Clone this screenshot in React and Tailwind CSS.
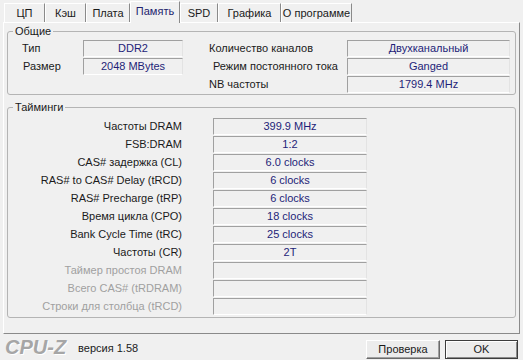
import React from 'react';

const tabs = [
  { name: 'ЦП', w: 'w-[41px]' },
  { name: 'Кэш', w: 'w-[41px]' },
  { name: 'Плата', w: 'w-[44px]' },
  { name: 'Память', w: 'w-[50px]', active: true },
  { name: 'SPD', w: 'w-[38px]' },
  { name: 'Графика', w: 'w-[63px]' },
  { name: 'О программе', w: 'w-[71px]' },
];

const timings = [
  { label: 'Частоты DRAM', value: '399.9 MHz' },
  { label: 'FSB:DRAM', value: '1:2' },
  { label: 'CAS# задержка (CL)', value: '6.0 clocks' },
  { label: 'RAS# to CAS# Delay (tRCD)', value: '6 clocks' },
  { label: 'RAS# Precharge (tRP)', value: '6 clocks' },
  { label: 'Время цикла (CPO)', value: '18 clocks' },
  { label: 'Bank Cycle Time (tRC)', value: '25 clocks' },
  { label: 'Частоты (CR)', value: '2T' },
  { label: 'Таймер простоя DRAM', value: '', off: true },
  { label: 'Всего CAS# (tRDRAM)', value: '', off: true },
  { label: 'Строки для столбца (tRCD)', value: '', off: true },
];

// sunken read-only box
const Field = ({ children }) => (
  <div className="h-[17px] flex items-center justify-center border border-t-[#a0a0a0] border-l-[#a0a0a0] border-b-white border-r-[#e3e3e3] text-[#1e1e78] leading-none">
    {children}
  </div>
);

const Group = ({ title, className, children }) => (
  <fieldset className={`mx-[3px] border border-[#b4b4b4] rounded-[3px] ${className}`}>
    <legend className="ml-[5px] px-[2px] leading-[13px]">{title}</legend>
    {children}
  </fieldset>
);

export default function App() {
  return (
    <div className="w-[523px] h-[360px] bg-[#f0f0f0] text-[11px] text-[#1a1a1a] font-['Liberation_Sans',Arial,sans-serif] flex flex-col overflow-hidden">
      {/* tabs */}
      <div className="h-[22px] flex items-end pl-[4px] shrink-0">
        {tabs.map((t) =>
          t.active ? (
            <div
              key={t.name}
              className={`${t.w} h-[22px] -mb-[1px] relative z-10 bg-[#f0f0f0] border-t border-l border-r border-t-white border-l-white border-r-[#8a8a8a] flex items-center justify-center pb-[2px] text-[#23236e]`}
            >
              {t.name}
            </div>
          ) : (
            <div
              key={t.name}
              className={`${t.w} h-[19px] border-t border-l border-r border-t-white border-l-white border-r-[#8a8a8a] flex items-center justify-center`}
            >
              {t.name}
            </div>
          )
        )}
      </div>

      {/* page */}
      <div className="ml-[3px] w-[517px] h-[312px] shrink-0 border border-t-white border-l-white border-r-[#8a8a8a] border-b-[#8a8a8a] pt-[2px]">
        <Group title="Общие" className="h-[70px]">
          <div className="grid grid-cols-[61px_100px_26px_138px_163px] auto-rows-[17px] gap-y-[1px] pl-[14px] pt-[2px]">
            <div className="flex items-center">Тип</div>
            <Field>DDR2</Field>
            <div />
            <div className="flex items-center">Количество каналов</div>
            <Field>Двухканальный</Field>

            <div className="flex items-center pl-[1px]">Размер</div>
            <Field>2048 MBytes</Field>
            <div />
            <div className="flex items-center pl-[4px]">Режим постоянного тока</div>
            <Field>Ganged</Field>

            <div />
            <div />
            <div />
            <div className="flex items-center">NB частоты</div>
            <Field>1799.4 MHz</Field>
          </div>
        </Group>

        <Group title="Тайминги" className="mt-[6px] h-[217px]">
          <div className="grid grid-cols-[174px_154px] gap-x-[31px] auto-rows-[17px] gap-y-[1px] pt-[4px]">
            {timings.map((r) => (
              <React.Fragment key={r.label}>
                <div className={`flex items-center justify-end ${r.off ? 'text-[#a0a0a0]' : ''}`}>{r.label}</div>
                <Field>{r.value}</Field>
              </React.Fragment>
            ))}
          </div>
        </Group>
      </div>

      {/* footer */}
      <div className="flex-1 flex items-center pl-[5px] pr-[5px]">
        <span className="font-bold italic text-[20px] leading-none text-[#a6a6a6] [text-shadow:1px_1px_0_#ffffff]">CPU-Z</span>
        <span className="ml-[12px] mt-[3px]">версия 1.58</span>
        <div className="ml-auto flex gap-[5px] mt-[4px]">
          <button className="w-[74px] h-[19px] bg-[#ececec] border border-t-white border-l-white border-r-[#6a6a6a] border-b-[#6a6a6a] shadow-[inset_-1px_-1px_0_#a0a0a0] leading-none">
            Проверка
          </button>
          <button className="w-[73px] h-[19px] bg-[#ececec] border border-[#3c3c3c] shadow-[inset_1px_1px_0_#ffffff,inset_-1px_-1px_0_#8a8a8a] leading-none">
            OK
          </button>
        </div>
      </div>
    </div>
  );
}
